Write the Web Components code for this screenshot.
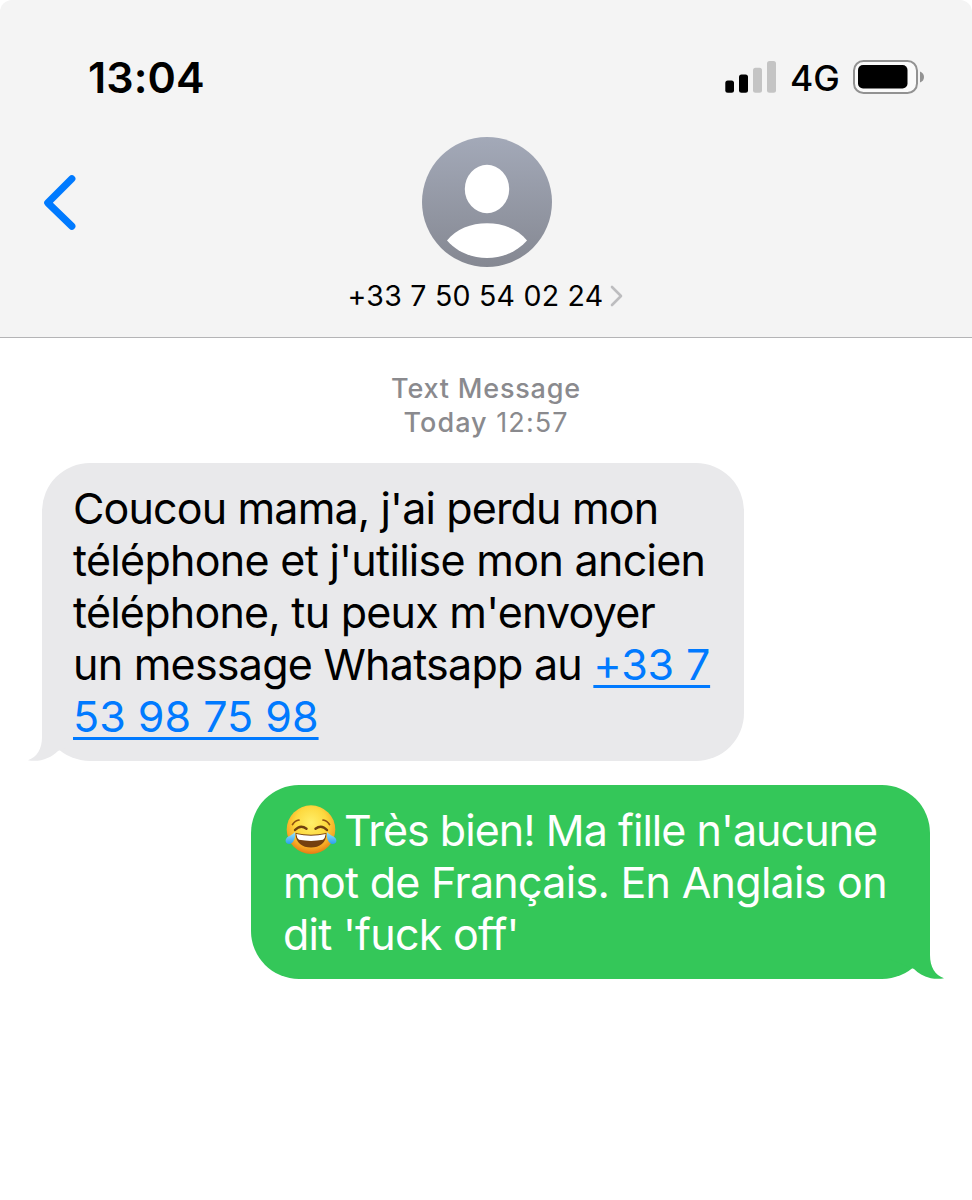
<!DOCTYPE html>
<html lang="fr">
<head>
<meta charset="UTF-8">
<meta name="viewport" content="width=device-width, initial-scale=1.0">
<title>Messages</title>
<style>
    body {
        margin: 0;
        background: #ffffff;
        font-family: Inter, "Liberation Sans", sans-serif;
        color: #000000;
    }
</style>
</head>
<body>
<message-thread>
    <status-bar slot="header" time="13:04" network="4G"></status-bar>
    <contact-bar slot="header" number="+33 7 50 54 02 24"></contact-bar>
    <thread-stamp label="Text Message" day="Today" time="12:57"></thread-stamp>
    <message-bubble kind="received">
        <text-line style="letter-spacing: -0.85px">Coucou mama, j'ai perdu mon</text-line>
        <text-line style="letter-spacing: -0.7px">téléphone et j'utilise mon ancien</text-line>
        <text-line style="letter-spacing: -0.76px">téléphone, tu peux m'envoyer</text-line>
        <text-line style="letter-spacing: -0.75px">un message Whatsapp au <phone-link style="letter-spacing: -0.15px">+33 7</phone-link></text-line>
        <text-line><phone-link>53 98 75 98</phone-link></text-line>
    </message-bubble>
    <message-bubble kind="sent">
        <text-line style="letter-spacing: -0.96px"><joy-emoji></joy-emoji>Très bien! Ma fille n'aucune</text-line>
        <text-line style="letter-spacing: -0.72px">mot de Français. En Anglais on</text-line>
        <text-line style="letter-spacing: -0.75px">dit 'fuck off'</text-line>
    </message-bubble>
</message-thread>

<script>
// Page frame: grey header on top, conversation below
class MessageThread extends HTMLElement {
    constructor() {
        super();
        this.attachShadow({ mode: 'open' });
    }

    connectedCallback() {
        this.shadowRoot.innerHTML = `
            <style>
                :host {
                    display: flex;
                    flex-direction: column;
                    height: 1200px;
                    overflow: hidden;
                }
                header {
                    box-sizing: border-box;
                    height: 338px;
                    background: #f4f4f4;
                    border-bottom: 1px solid #b4b4b6;
                    border-radius: 12px 12px 0 0;
                }
                main {
                    display: flex;
                    flex-direction: column;
                }
            </style>
            <header><slot name="header"></slot></header>
            <main><slot></slot></main>
        `;
    }
}

// Clock, signal strength, network type and battery
class StatusBar extends HTMLElement {
    constructor() {
        super();
        this.attachShadow({ mode: 'open' });
    }

    connectedCallback() {
        this.shadowRoot.innerHTML = `
            <style>
                :host {
                    display: flex;
                    align-items: center;
                    justify-content: space-between;
                    box-sizing: border-box;
                    height: 137px;
                    padding: 16px 47px 0 88px;
                }
                .time {
                    font-size: 43px;
                    font-weight: 600;
                    letter-spacing: 0.1px;
                }
                .status {
                    display: flex;
                    align-items: center;
                }
                .network {
                    width: 62px;
                    padding: 3px 0 0 14px;
                    box-sizing: border-box;
                    font-size: 35.5px;
                    font-weight: 500;
                }
                svg {
                    display: block;
                }
                .battery {
                    margin-left: 15px;
                }
            </style>
            <span class="time">${this.getAttribute('time')}</span>
            <div class="status">
                <svg width="51" height="34" viewBox="0 0 51 34">
                    <rect x="0.3" y="20.5" width="8.7" height="12.3" rx="2.5" fill="#000"/>
                    <rect x="14" y="14.5" width="9" height="18.3" rx="2.5" fill="#000"/>
                    <rect x="28" y="7.8" width="9" height="25" rx="2.5" fill="#c4c4c4"/>
                    <rect x="42" y="1" width="9" height="31.8" rx="2.5" fill="#c4c4c4"/>
                </svg>
                <span class="network">${this.getAttribute('network')}</span>
                <svg class="battery" width="72" height="34" viewBox="0 0 72 34">
                    <rect x="1" y="1" width="63" height="32" rx="9.5" fill="#fafafa" stroke="#929292" stroke-width="2"/>
                    <rect x="5" y="5" width="49.5" height="23.5" rx="5" fill="#000"/>
                    <path d="M67 11.5 Q71 13 71 17 T67 22.5Z" fill="#929292"/>
                </svg>
            </div>
        `;
    }
}

// Back arrow, avatar and contact number
class ContactBar extends HTMLElement {
    constructor() {
        super();
        this.attachShadow({ mode: 'open' });
    }

    connectedCallback() {
        this.shadowRoot.innerHTML = `
            <style>
                :host {
                    display: grid;
                    grid-template-columns: 121px 1fr 119px;
                    height: 200px;
                }
                .back {
                    margin: 36px 0 0 42px;
                }
                .contact {
                    display: flex;
                    flex-direction: column;
                    align-items: center;
                }
                svg {
                    display: block;
                }
                .number {
                    display: flex;
                    align-items: center;
                    margin: 10px 3px 0 0;
                    height: 36px;
                    font-size: 28.5px;
                    letter-spacing: 0.25px;
                    white-space: pre;
                }
                .number svg {
                    margin: 2px 0 0 7px;
                }
            </style>
            <svg class="back" width="36" height="58" viewBox="0 0 36 58">
                <path d="M29.8 5.8 L5.8 29.8 L29.8 53.2" fill="none" stroke="#007aff" stroke-width="7.2" stroke-linecap="round" stroke-linejoin="round"/>
            </svg>
            <div class="contact">
                <svg width="130" height="130" viewBox="0 0 130 130">
                    <defs>
                        <linearGradient id="shade" x1="0" y1="0" x2="0" y2="1">
                            <stop offset="0" stop-color="#a3a9b8"/>
                            <stop offset="1" stop-color="#858892"/>
                        </linearGradient>
                    </defs>
                    <circle cx="65" cy="65" r="65" fill="url(#shade)"/>
                    <ellipse cx="65" cy="52" rx="22.2" ry="24.2" fill="#fff"/>
                    <path d="M25 103.5 C34 92 49 86.3 65 86.3 S96 92 105 103.5 C95 115 80 121 65 121 S35 115 25 103.5Z" fill="#fff"/>
                </svg>
                <div class="number"><span>${this.getAttribute('number')}</span><svg width="13" height="22" viewBox="0 0 13 22"><path d="M2 2 L11 11 L2 20" fill="none" stroke="#bdbdbf" stroke-width="2.6" stroke-linecap="round" stroke-linejoin="round"/></svg></div>
            </div>
        `;
    }
}

class ThreadStamp extends HTMLElement {
    constructor() {
        super();
        this.attachShadow({ mode: 'open' });
    }

    connectedCallback() {
        this.shadowRoot.innerHTML = `
            <style>
                :host {
                    display: flex;
                    flex-direction: column;
                    align-items: center;
                    padding: 34px 0 24px;
                    font-size: 27px;
                    line-height: 33.5px;
                    color: #8a8a8e;
                }
                .label {
                    letter-spacing: 0.8px;
                }
                .when {
                    letter-spacing: 1.05px;
                }
                .label, .day {
                    font-weight: 500;
                }
            </style>
            <span class="label">${this.getAttribute('label')}</span>
            <span class="when"><span class="day">${this.getAttribute('day')}</span> ${this.getAttribute('time')}</span>
        `;
    }
}

class MessageBubble extends HTMLElement {
    constructor() {
        super();
        this.attachShadow({ mode: 'open' });
    }

    connectedCallback() {
        this.shadowRoot.innerHTML = `
            <style>
                :host {
                    display: block;
                    position: relative;
                    isolation: isolate;
                    box-sizing: border-box;
                    font-size: 43px;
                    line-height: 52px;
                    border-radius: 48px;
                }
                :host([kind="received"]) {
                    --bubble: #e9e9eb;
                    align-self: flex-start;
                    width: 702px;
                    margin-left: 42px;
                    padding: 19px 0 19px 31px;
                    background: var(--bubble);
                }
                :host([kind="sent"]) {
                    --bubble: #34c759;
                    align-self: flex-end;
                    width: 679px;
                    margin: 24px 42px 0 0;
                    padding: 19px 0 19px 32px;
                    color: #ffffff;
                    background: var(--bubble);
                }
                /* the tail hangs over the bottom corner, behind the text */
                svg {
                    position: absolute;
                    z-index: -1;
                    bottom: 0;
                    right: -15px;
                }
                :host([kind="received"]) svg {
                    right: auto;
                    left: -15px;
                    transform: scaleX(-1);
                }
            </style>
            <slot></slot>
            <svg width="56" height="60" viewBox="0 0 56 60">
                <path d="M0 0 H41 V36 C41 48 46 56 55 59.3 C43 61.5 32 57 25 50 L0 40Z" fill="var(--bubble)"/>
            </svg>
        `;
    }
}

class TextLine extends HTMLElement {
    constructor() {
        super();
        this.attachShadow({ mode: 'open' });
    }

    connectedCallback() {
        this.shadowRoot.innerHTML = `
            <style>
                :host {
                    display: block;
                    height: 52px;
                    white-space: nowrap;
                }
            </style>
            <slot></slot>
        `;
    }
}

class PhoneLink extends HTMLElement {
    constructor() {
        super();
        this.attachShadow({ mode: 'open' });
    }

    connectedCallback() {
        this.shadowRoot.innerHTML = `
            <style>
                :host {
                    display: inline;
                    color: #007aff;
                    text-decoration: underline;
                    text-decoration-thickness: 3px;
                    text-underline-offset: 5px;
                    text-decoration-skip-ink: none;
                }
            </style>
            <slot></slot>
        `;
    }
}

// Face with tears of joy
class JoyEmoji extends HTMLElement {
    constructor() {
        super();
        this.attachShadow({ mode: 'open' });
    }

    connectedCallback() {
        this.shadowRoot.innerHTML = `
            <style>
                :host {
                    display: inline-block;
                    width: 61px;
                    height: 52px;
                    vertical-align: top;
                }
                svg {
                    display: block;
                    margin-left: 2px;
                }
            </style>
            <svg width="53" height="52" viewBox="0 0 53 52">
                <defs>
                    <radialGradient id="face" cx="0.5" cy="0.36" r="0.64">
                        <stop offset="0" stop-color="#ffef6a"/>
                        <stop offset="0.5" stop-color="#fdd93f"/>
                        <stop offset="0.8" stop-color="#f7ab25"/>
                        <stop offset="1" stop-color="#e67c14"/>
                    </radialGradient>
                    <linearGradient id="tear" x1="0" y1="0" x2="0" y2="1">
                        <stop offset="0" stop-color="#9be4fb"/>
                        <stop offset="1" stop-color="#2aa0ee"/>
                    </linearGradient>
                </defs>
                <circle cx="26" cy="25.6" r="24.3" fill="url(#face)"/>
                <path d="M7.5 20.5 Q10 16.5 14 16 M44.5 20.5 Q42 16.5 38 16" fill="none" stroke="#8f5212" stroke-width="1.7" stroke-linecap="round"/>
                <path d="M10 26 Q15.5 20 21.5 24.8 M42 26 Q36.5 20 30.5 24.8" fill="none" stroke="#70400f" stroke-width="2.4" stroke-linecap="round"/>
                <path d="M10.5 29 Q26 32.5 41.5 29 C41.5 39 34.5 43.5 26 43.5 S10.5 39 10.5 29Z" fill="#75400f"/>
                <path d="M11.3 30.1 Q26 33.5 40.7 30.1 Q40.2 34.3 38 35.8 Q26 38 14 35.8 Q11.8 34.3 11.3 30.1Z" fill="#fff"/>
                <path d="M10 28 C10.8 34 8.5 40 4.3 40 C-0.5 40 -0.5 34.5 3.5 32.5 C6.5 31 8.5 29.8 10 28Z" fill="url(#tear)"/>
                <path d="M42 28 C41.2 34 43.5 40 47.7 40 C52.5 40 52.5 34.5 48.5 32.5 C45.5 31 43.5 29.8 42 28Z" fill="url(#tear)"/>
            </svg>
        `;
    }
}

customElements.define('message-thread', MessageThread);
customElements.define('status-bar', StatusBar);
customElements.define('contact-bar', ContactBar);
customElements.define('thread-stamp', ThreadStamp);
customElements.define('message-bubble', MessageBubble);
customElements.define('text-line', TextLine);
customElements.define('phone-link', PhoneLink);
customElements.define('joy-emoji', JoyEmoji);
</script>
</body>
</html>
